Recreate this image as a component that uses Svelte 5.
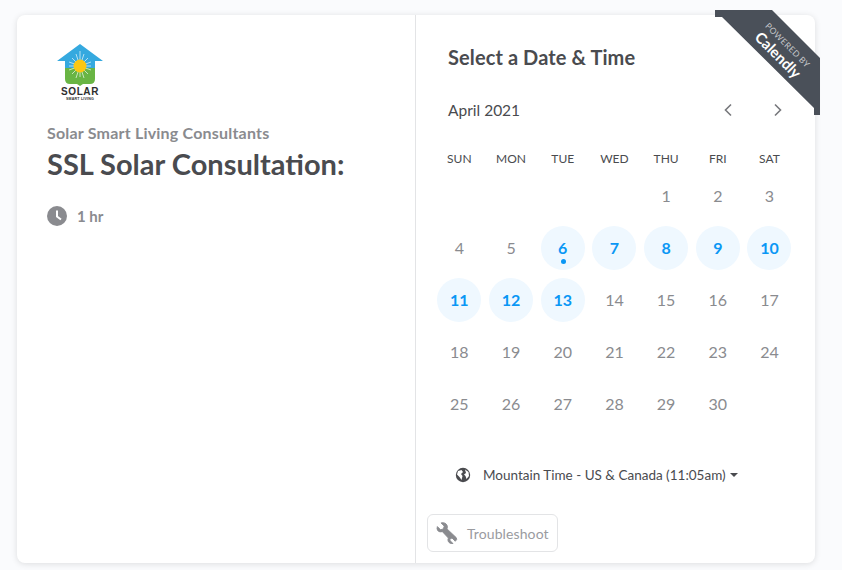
<script>
	const weekdays = ['SUN', 'MON', 'TUE', 'WED', 'THU', 'FRI', 'SAT'];
	const available = [6, 7, 8, 9, 10, 11, 12, 13];
	const today = 6;
	// April 2021 starts on a Thursday
	const cells = [...Array(4).fill(null), ...Array.from({ length: 30 }, (_, i) => i + 1)];
</script>

<div class="page">
	<main class="card">
		<section class="details">
			<svg class="logo" viewBox="0 0 46 58" width="46" height="58" aria-label="Solar Smart Living">
				<path d="M23 1 L46 18 H38 V25 H8 V18 H0 Z" fill="#35a9df" />
				<path d="M8 25 H38 V36 Q38 41 33 41 H26 L23 43 L20 41 H13 Q8 41 8 36 Z" fill="#69b544" />
				<g stroke="#fff" stroke-width="0.8" opacity="0.8">
					<path d="M23 8 V34 M12 23 H34 M15 15 L31 31 M31 15 L15 31 M19 11 L27 35 M27 11 L19 35 M12 19 L34 27 M34 19 L12 27" />
				</g>
				<circle cx="23" cy="23" r="6.5" fill="#fbc712" />
				<text x="23" y="52" class="logo-main" text-anchor="middle">SOLAR</text>
				<text x="23" y="57" class="logo-sub" text-anchor="middle">SMART LIVING</text>
			</svg>
			<div class="org">Solar Smart Living Consultants</div>
			<h1>SSL Solar Consultation:</h1>
			<div class="duration">
				<svg viewBox="0 0 20 20" width="20" height="20">
					<circle cx="10" cy="10" r="10" fill="#8a8b8f" />
					<path d="M10 4.5 V10.5 L14 13.5" fill="none" stroke="#fff" stroke-width="2" />
				</svg>
				<span>1 hr</span>
			</div>
		</section>

		<section class="picker">
			<h2>Select a Date &amp; Time</h2>
			<div class="month">
				<span>April 2021</span>
				<div class="nav">
					<svg viewBox="0 0 10 14" width="10" height="14"><path d="M8 1.5 L2.5 7 L8 12.5" /></svg>
					<svg viewBox="0 0 10 14" width="10" height="14"><path d="M2 1.5 L7.5 7 L2 12.5" /></svg>
				</div>
			</div>
			<div class="grid">
				{#each weekdays as day}
					<div class="weekday">{day}</div>
				{/each}
				{#each cells as date}
					<div class="cell">
						{#if date}
							<div class="date" class:available={available.includes(date)}>
								{date}
								{#if date === today}<i class="dot"></i>{/if}
							</div>
						{/if}
					</div>
				{/each}
			</div>
			<div class="timezone">
				<svg viewBox="0 0 16 16" width="16" height="16">
					<circle cx="8" cy="8" r="7.2" fill="#4a4b4f" />
					<path d="M3 4 L6.5 3 L8 5 L6 7 L7.5 9 L6.5 13 L4.5 10 L2 7.5 Z M10 2.5 L13.5 5 L14 9 L11.5 12 L10.5 9 L9 7.5 L11 6 Z" fill="#fff" />
				</svg>
				<span>Mountain Time - US &amp; Canada (11:05am)</span>
				<i class="caret"></i>
			</div>
			<button class="troubleshoot">
				<svg viewBox="0 0 24 24" width="22" height="22">
					<path d="M1.5 5 L5 8.5 L8 7.5 L9 4.5 L5.5 1 Q10 0 12 3.5 Q12.8 5.5 12 7.5 L22 17 Q23.5 19 21.5 20.5 L21 21 L17.5 17.5 L15 18.5 L15.5 20.5 L18.5 23.5 Q15 24 13.5 21.5 Q12.5 19.5 13.5 17.5 L7 10.5 Q4 11.5 2 9.5 Q0.5 7.5 1.5 5 Z" fill="#8a8b8f" stroke="#8a8b8f" stroke-width="1" />
				</svg>
				<span>Troubleshoot</span>
			</button>
		</section>

		<div class="ribbon">
			<svg viewBox="0 0 105 105" width="105" height="105">
				<path d="M0 0 H57 L105 48 V105 H99 V98 L7 7 H0 Z" fill="#4a5059" />
			</svg>
			<div class="ribbon-text">
				<span class="powered">POWERED BY</span>
				<span class="brand">Calendly</span>
			</div>
		</div>
	</main>
</div>

<style>
	:global(body) {
		background: #fafbfd;
	}
	.page {
		height: 570px;
		box-sizing: border-box;
		padding: 15px 27px 7px 17px;
		font-family: Lato, 'Liberation Sans', sans-serif;
		overflow: hidden;
	}
	.card {
		position: relative;
		height: 100%;
		display: flex;
		background: #fff;
		border-radius: 8px;
		box-shadow: 0 1px 6px rgba(0, 0, 0, 0.12);
	}
	.details {
		width: 399px;
		box-sizing: border-box;
		padding: 28px 30px 0;
		border-right: 1px solid #e3e4e6;
	}
	.logo {
		display: block;
		margin-left: 10px;
	}
	.logo-main {
		font: 800 10px 'Liberation Sans', sans-serif;
		letter-spacing: 0.6px;
		fill: #2f2f2f;
	}
	.logo-sub {
		font: 700 3.6px 'Liberation Sans', sans-serif;
		letter-spacing: 0.2px;
		fill: #2f2f2f;
	}
	.org {
		margin-top: 23px;
		font-size: 16px;
		line-height: 18px;
		font-weight: 700;
		letter-spacing: 0.2px;
		color: #8a8b8f;
	}
	h1 {
		margin: 5px 0 0;
		font-size: 29px;
		line-height: 34px;
		font-weight: 700;
		color: #4a4b4f;
	}
	.duration {
		display: flex;
		align-items: center;
		gap: 10px;
		margin-top: 25px;
		font-size: 15px;
		font-weight: 700;
		color: #8a8b8f;
	}
	.picker {
		flex: 1;
		min-width: 0;
		display: flex;
		flex-direction: column;
		padding-top: 30px;
	}
	h2 {
		margin: 0 0 0 32px;
		font-size: 20px;
		line-height: 24px;
		font-weight: 700;
		letter-spacing: 0.1px;
		color: #4a4b4f;
	}
	.month {
		display: flex;
		align-items: center;
		justify-content: space-between;
		margin: 29px 32px 0 32px;
		height: 24px;
		font-size: 15.5px;
		color: #4a4b4f;
	}
	.nav {
		display: flex;
		gap: 40px;
	}
	.nav svg {
		fill: none;
		stroke: #77787c;
		stroke-width: 1.6;
		display: block;
	}
	.grid {
		display: grid;
		grid-template-columns: repeat(7, 51.7px);
		grid-template-rows: 23px;
		grid-auto-rows: 52px;
		margin: 25px 0 0 17.5px;
	}
	.weekday {
		text-align: center;
		font-size: 12px;
		line-height: 23px;
		color: #4a4b4f;
	}
	.cell {
		display: flex;
		align-items: center;
		justify-content: center;
	}
	.date {
		position: relative;
		box-sizing: border-box;
		width: 44px;
		height: 44px;
		padding-bottom: 2px;
		border-radius: 50%;
		display: flex;
		align-items: center;
		justify-content: center;
		font-size: 16px;
		color: #8a8b8f;
	}
	.date.available {
		background: #eff8ff;
		color: #0a97f5;
		font-weight: 700;
	}
	.dot {
		position: absolute;
		left: 20px;
		bottom: 6px;
		width: 5px;
		height: 5px;
		border-radius: 50%;
		background: #0a97f5;
	}
	.timezone {
		display: flex;
		align-items: center;
		gap: 12px;
		margin: 34px 0 0 39px;
		height: 22px;
		font-size: 13.5px;
		color: #4a4b4f;
	}
	.caret {
		margin-left: -8px;
		border: 4px solid transparent;
		border-top-color: #4a4b4f;
		border-bottom: none;
	}
	.troubleshoot {
		align-self: flex-start;
		display: flex;
		align-items: center;
		gap: 9px;
		margin: 28px 0 0 11px;
		width: 131px;
		height: 38px;
		padding: 0 8px;
		background: #fff;
		border: 1px solid #e3e4e6;
		border-radius: 6px;
		font: inherit;
		font-size: 14px;
		letter-spacing: 0.1px;
		color: #9a9b9f;
	}
	.troubleshoot span {
		white-space: nowrap;
	}
	.ribbon {
		position: absolute;
		top: -5px;
		right: -5px;
		width: 105px;
		height: 105px;
	}
	.ribbon svg {
		display: block;
	}
	.ribbon-text {
		position: absolute;
		left: 27px;
		top: 28px;
		width: 80px;
		display: flex;
		flex-direction: column;
		align-items: center;
		transform: rotate(45deg);
		color: #fff;
	}
	.powered {
		font-size: 8.5px;
		line-height: 10px;
		letter-spacing: 0.4px;
		color: #c6c8cb;
		white-space: nowrap;
	}
	.brand {
		font-size: 15px;
		line-height: 16px;
		font-weight: 700;
	}
</style>
